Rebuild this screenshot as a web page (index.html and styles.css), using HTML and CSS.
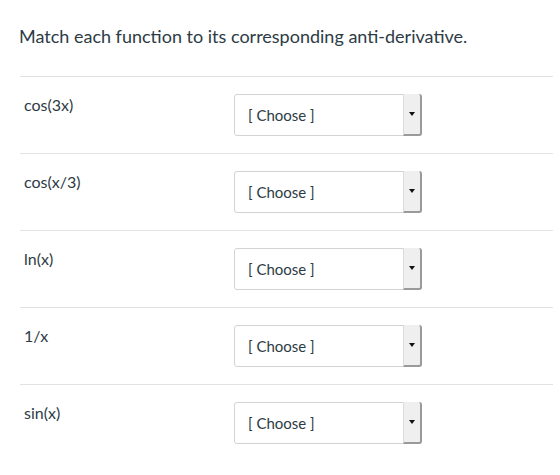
FILE: index.html
```html
<!DOCTYPE html>
<html lang="en">
<head>
    <meta charset="UTF-8">
    <meta name="viewport" content="width=device-width, initial-scale=1.0">
    <title>Matching question</title>
    <link rel="stylesheet" href="styles.css">
</head>
<body>
    <div class="question">
        <p class="question-text">Match each function to its corresponding anti-derivative.</p>

        <div class="answers">
            <div class="answer-row">
                <div class="answer-label">cos(3x)</div>
                <div class="fake-select">
                    <span class="select-value">[ Choose ]</span>
                    <span class="select-btn"><span class="caret"></span></span>
                </div>
            </div>
            <div class="answer-row">
                <div class="answer-label">cos(x/3)</div>
                <div class="fake-select">
                    <span class="select-value">[ Choose ]</span>
                    <span class="select-btn"><span class="caret"></span></span>
                </div>
            </div>
            <div class="answer-row">
                <div class="answer-label">ln(x)</div>
                <div class="fake-select">
                    <span class="select-value">[ Choose ]</span>
                    <span class="select-btn"><span class="caret"></span></span>
                </div>
            </div>
            <div class="answer-row">
                <div class="answer-label">1/x</div>
                <div class="fake-select">
                    <span class="select-value">[ Choose ]</span>
                    <span class="select-btn"><span class="caret"></span></span>
                </div>
            </div>
            <div class="answer-row">
                <div class="answer-label">sin(x)</div>
                <div class="fake-select">
                    <span class="select-value">[ Choose ]</span>
                    <span class="select-btn"><span class="caret"></span></span>
                </div>
            </div>
        </div>
    </div>
</body>
</html>
```

FILE: styles.css
```css
/* matching question */
body {
    margin: 0;
    font-family: Lato, "Open Sans", sans-serif;
    color: #2d3b45;
    background: #fff;
}

.question {
    padding: 0 7px 0 20px;
}

.question-text {
    margin: 0;
    padding-top: 25px;
    font-size: 18px;
    line-height: 22px;
    height: 51px;
    margin-left: -1px;
}

.answer-row {
    display: flex;
    border-top: 1px solid #e2e2e2;
    padding: 17px 0 17px 0;
    height: 42px;
}

.answer-label {
    width: 214px;
    padding-left: 4px;
    box-sizing: border-box;
    font-size: 16px;
    line-height: 20px;
    padding-top: 1px;
}

.fake-select {
    display: flex;
    width: 188px;
    height: 42px;
    box-sizing: border-box;
    border: 1px solid #d3d3d3;
    border-radius: 3px;
    background: #fff;
}

.select-value {
    flex: 1;
    padding-left: 13px;
    font-size: 15px;
    line-height: 40px;
}

.select-btn {
    width: 16px;
    background: #efefef;
    border-left: 1px solid #dcdcdc;
    border-right: 2px solid #9a9a9a;
    border-bottom: 2px solid #9a9a9a;
    border-radius: 0 3px 3px 0;
    display: flex;
    align-items: center;
    justify-content: center;
    margin: -1px -1px -1px 0;
}

.caret {
    width: 0;
    height: 0;
    border-left: 3px solid transparent;
    border-right: 3px solid transparent;
    border-top: 4px solid #111;
}
```
